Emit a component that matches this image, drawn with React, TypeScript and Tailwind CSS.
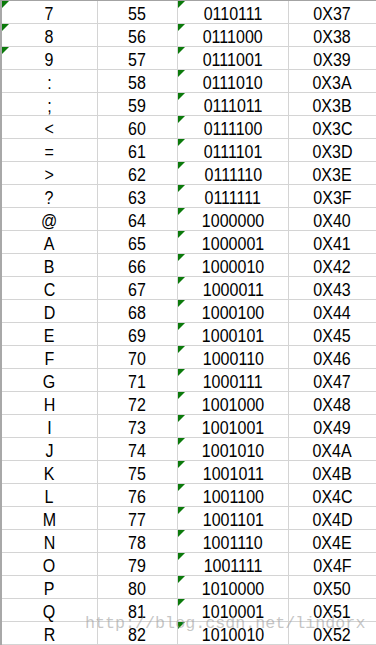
import React from "react";

const rows = Array.from({ length: 28 }, (_, i) => {
  const code = 55 + i;
  return {
    ch: String.fromCharCode(code),
    dec: String(code),
    bin: code.toString(2).padStart(7, "0"),
    hex: "0X" + code.toString(16).toUpperCase(),
    textFlag: code <= 57,
  };
});

function Flag() {
  return (
    <span className="absolute left-0 top-0 h-0 w-0 border-t-[7px] border-r-[7px] border-t-[#0b7a0b] border-r-transparent" />
  );
}

function T({ children }: { children: React.ReactNode }) {
  return <span className="inline-block scale-x-[0.89]">{children}</span>;
}

export default function App() {
  return (
    <div
      className="relative h-[645px] w-[376px] overflow-hidden bg-white text-[18px] text-black"
      style={{ fontFamily: '"Liberation Sans", Arial, sans-serif' }}
    >
      <div className="flex flex-col border-l-2 border-t border-l-[#a8a8a8] border-t-[#a3a3a3]">
        {rows.map((r) => (
          <div key={r.dec} className="flex h-[23px] border-b border-b-[#d4d4d4]">
            <div className="relative h-[22px] w-[96px] border-r border-r-[#d4d4d4] pt-[4px] text-center leading-[18px]">
              {r.textFlag && <Flag />}
              <T>{r.ch}</T>
            </div>
            <div className="relative h-[22px] w-[80px] border-r border-r-[#d4d4d4] pt-[4px] text-center leading-[18px]">
              <T>{r.dec}</T>
            </div>
            <div className="relative h-[22px] w-[111px] border-r border-r-[#d4d4d4] pt-[4px] text-center leading-[18px]">
              <Flag />
              <T>{r.bin}</T>
            </div>
            <div className="relative h-[22px] flex-1 pt-[4px] text-center leading-[18px]">
              <T>{r.hex}</T>
            </div>
          </div>
        ))}
      </div>
      <div
        className="pointer-events-none absolute left-[85px] top-[614px] whitespace-nowrap text-[16.7px] leading-[20px] text-[#a0a0a0]/60"
        style={{ fontFamily: '"Liberation Mono", "Courier New", monospace' }}
      >
        http://blog.csdn.net/lindorx
      </div>
    </div>
  );
}
